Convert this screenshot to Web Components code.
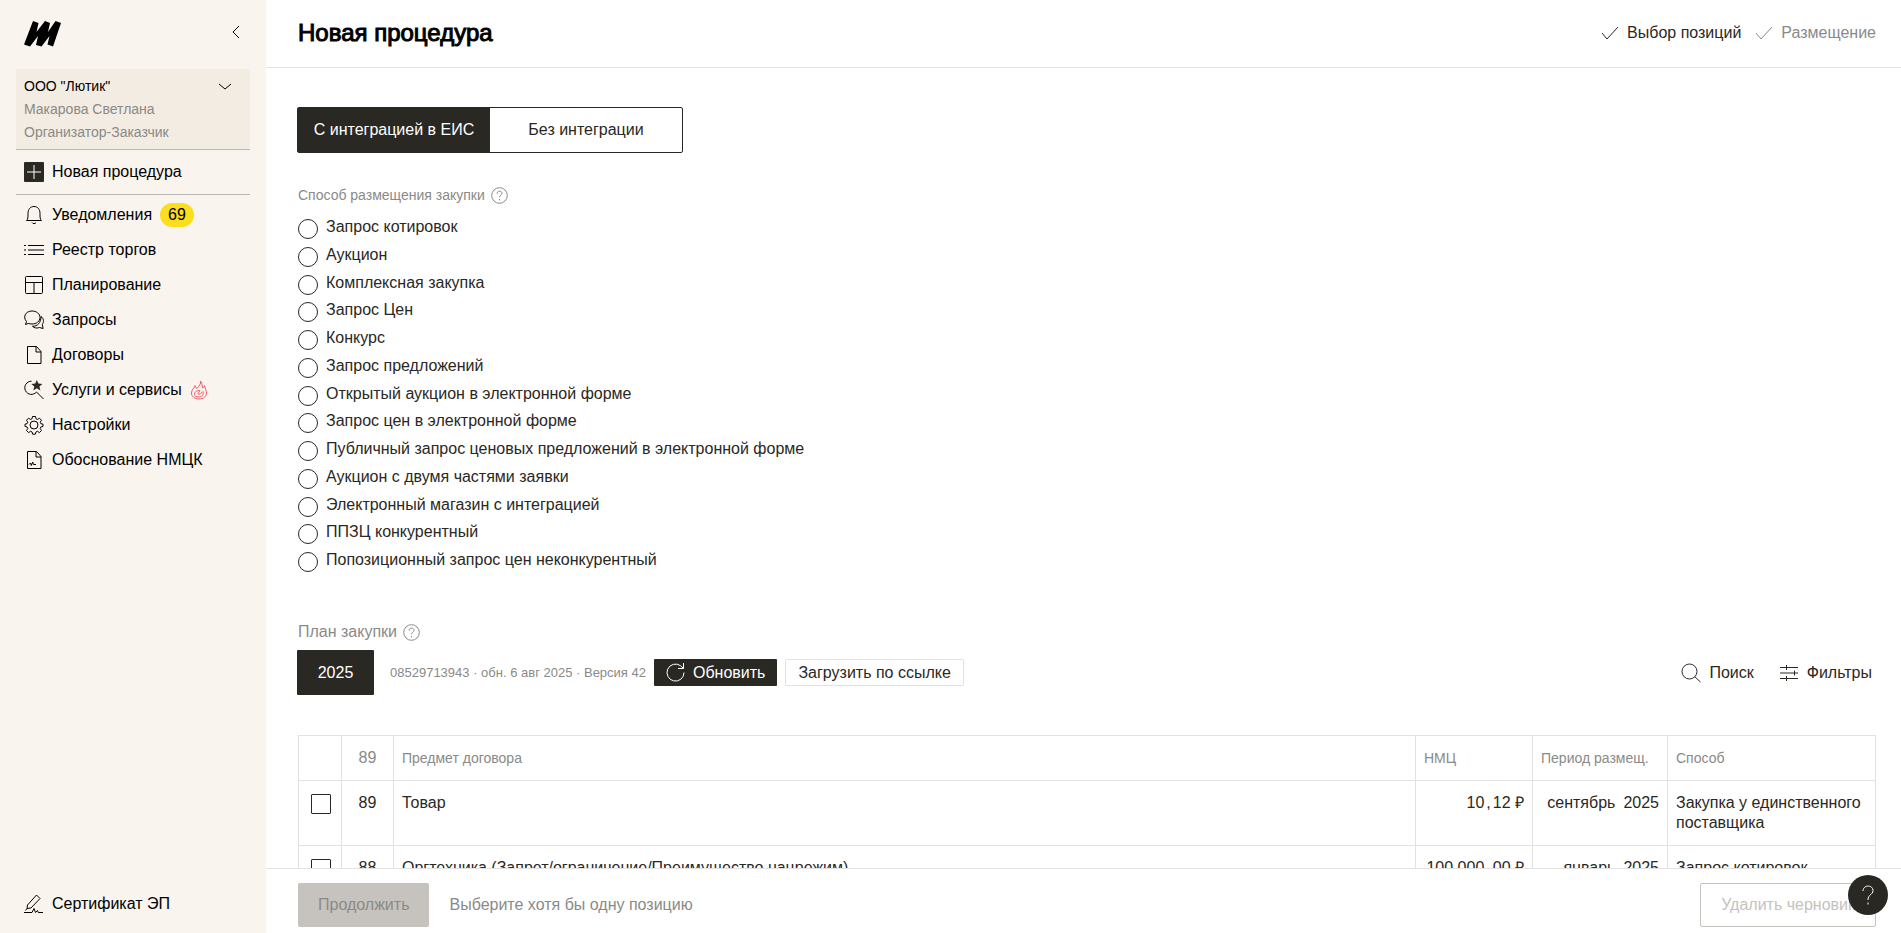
<!DOCTYPE html>
<html lang="ru">
<head>
<meta charset="utf-8">
<title>Новая процедура</title>
<style>
  html, body {
    height: 100%;
    margin: 0;
  }

  body {
    --dark: #2a2823;
    --grey: #8a8a88;
    --line: #e2e2e2;
    font-family: "Liberation Sans", Arial, sans-serif;
    font-size: 16px;
    line-height: 20px;
    color: var(--dark);
    background: #fff;
  }
</style>
</head>
<body>
<app-shell>
  <side-bar slot="side"></side-bar>
  <page-header slot="header" heading="Новая процедура">
    <step-mark>Выбор позиций</step-mark>
    <step-mark pending>Размещение</step-mark>
  </page-header>
  <mode-switch></mode-switch>
  <purchase-method></purchase-method>
  <plan-toolbar></plan-toolbar>
  <plan-table></plan-table>
  <page-footer slot="footer"></page-footer>
</app-shell>
<help-button></help-button>

<script>
const icons = {
  logo: '<svg width="38" height="26" viewBox="0 0 38 26"><path d="M9 0 14.500 2 12.500 11 21 0 26 2 24 11 31.500 0 37 2 29 25.500 23.500 23.500 25.500 15 17.500 25.500 12 24 14 15 6 25.500 0 23.500Z" fill="#000" stroke="none"/></svg>',
  left: '<svg width="8" height="14" viewBox="0 0 8 14"><path d="M7 1 1 7l6 6"/></svg>',
  down: '<svg width="14" height="8" viewBox="0 0 14 8"><path d="m1 1 6 5 6-5"/></svg>',
  plus: '<svg width="20" height="20" viewBox="0 0 20 20"><rect width="20" height="20" rx="1" fill="#2a2823" stroke="none"/><path d="M3 10h14M10 3v14" stroke="#fff"/></svg>',
  bell: '<svg width="20" height="20" viewBox="0 0 20 20"><path d="M2.500 15.500c1.500-1.200 1.500-3 1.500-7 0-4.500 2.500-7 6-7s6 2.500 6 7c0 4 0 5.800 1.500 7zM8 17.500c.8 1.500 3.200 1.500 4 0"/></svg>',
  list: '<svg width="20" height="20" viewBox="0 0 20 20"><path d="M0 5.500h2m2 0h16M0 10h2m2 0h16M0 14.500h2m2 0h16" stroke-width="1.200"/></svg>',
  grid: '<svg width="20" height="20" viewBox="0 0 20 20"><rect x="1.500" y="1.500" width="17" height="17" rx="1"/><path d="M1.500 7.500h17M10 7.500v11"/></svg>',
  chat: '<svg width="20" height="20" viewBox="0 0 20 20"><path d="M1.500 14.500 2.500 11.500C-1.500 7 1.500 1 8 1c4.500 0 8 2.800 8 6.500S12.500 14 8 14c-1.200 0-2.500-.2-3.500-.6zM17 6.500c3 2 3 5.500 1.300 8l.8 4-3.600-1c-2.500 1-5.500.6-7-1.200 5 0 8.500-3.500 8.500-9.800"/></svg>',
  file: '<svg width="20" height="20" viewBox="0 0 20 20"><path d="M3.500 1.500h9l4.500 5v12H3.500zM12 1.500V7h5"/></svg>',
  magic: '<svg width="20" height="20" viewBox="0 0 20 20"><path d="M7.500 1.200A6.600 6.600 0 1 0 12.500 12L19.500 19"/><path d="m12.800 0 1.600 3.600 4 .3-3 2.600 1 3.900-3.600-2.200-3.500 2.200 1-3.900-3-2.600 4-.3z" fill="#2a2823" stroke="none"/></svg>',
  fire: '<svg width="18" height="20" viewBox="0 0 18 20"><path d="M10.500 1c.8 3-1.500 4.500-3.500 7.500C6 8 5.500 7 5 5.500 4.500 8 1.500 9.500 1.500 13c0 3.500 3 6 7.500 6s7.500-2.500 7.500-6c0-2.500-1.500-4.500-2-7.500-.5 1.500-1 2-2 2.500C12 5.500 12.500 3 10.500 1zM4.500 14.500c0-3 2.500-4 5.500-4-.5 2-2.500 2-2 3.500 1.500.5 3.500-.5 5-2.500 1 2.500-.5 5.500-4 5.500-2.500 0-4.500-.8-4.500-2.500z" stroke="#f4596b"/></svg>',
  gear: '<svg width="20" height="20" viewBox="0 0 20 20"><circle cx="10" cy="10" r="4"/><path d="M8.500 1.500h3l.5 2.300 1.500.6 2-1.200 2 2-1.300 2 .6 1.500 2.200.4v2.300l-2.200.6-.6 1.500 1.300 2-2.100 2.100-2-1.300-1.500.7-.5 2.200H8.600l-.5-2.200-1.500-.7-2 1.300-2.100-2.100 1.300-2-.7-1.500-2.100-.6V9.100l2.100-.4.7-1.500-1.300-2 2-2 2 1.200 1.500-.6z"/></svg>',
  fileSign: '<svg width="20" height="20" viewBox="0 0 20 20"><path d="M3.500 1.500h9l4.500 5v12H3.500zM12 1.500V7h5M5 14.500l1.500-1.500.8 2.500 1.400-3.500.8 2.500H12"/></svg>',
  sign: '<svg width="20" height="20" viewBox="0 0 20 20"><path d="M3 14.500 3.500 11 12.500 1 16 4.500 7 14zM0 18.500h8l2-4 1.500 4 2-2 .8 2H19M3 14.500l-1.500 2"/></svg>',
  check: '<svg width="18" height="14" viewBox="0 0 18 14"><path d="m1 7 5 6L17 1"/></svg>',
  hint: '<svg width="17" height="17" viewBox="0 0 17 17"><circle cx="8.500" cy="8.500" r="7.800"/><path d="M6 6.700C6 3.300 11 3.400 11 6.300c0 2-2.500 2-2.500 4M8.500 12v1.400"/></svg>',
  refresh: '<svg width="19" height="19" viewBox="0 0 19 19"><path d="M18 9.500A8.500 8.500 0 1 1 14.500 2.700L17.500 5.500M17.500 0v5.500H12"/></svg>',
  search: '<svg width="20" height="20" viewBox="0 0 20 20"><circle cx="8.500" cy="8.500" r="7.500"/><path d="m14 14 5.500 5"/></svg>',
  filters: '<svg width="20" height="18" viewBox="0 0 20 18"><path d="M1 3.500h18M1 9h18M1 14.500h18M7.500 1v5M15.500 6.500v5M7.500 12v5"/></svg>',
  question: '<svg width="12" height="20" viewBox="0 0 12 20"><path d="M1 6C1 -.5 11 -.5 11 5.500 11 10 6 9 6 15M6 17.500v2"/></svg>'
};

const buttonStyles = `
  button {
    font: inherit;
    color: inherit;
    cursor: pointer;
    padding: 0;
    margin: 0;
    border: 0;
    background: none;
  }
`;

function render(el, html) {
  const template = document.createElement('template');
  template.innerHTML = html;
  el.attachShadow({ mode: 'open' }).appendChild(template.content.cloneNode(true));
}

class UiIcon extends HTMLElement {
  constructor() {
    super();
    render(this, `
      <style>
        :host { display: inline-flex; flex: none; align-items: center; justify-content: center; }
        svg { display: block; fill: none; stroke: currentColor; }
      </style>
      ${icons[this.getAttribute('name')]}
    `);
  }
}

class AppShell extends HTMLElement {
  constructor() {
    super();
    render(this, `
      <style>
        :host { display: grid; grid-template-columns: 266px minmax(0, 1fr); height: 100vh; }
        .page { display: flex; flex-direction: column; min-height: 0; height: 100vh; }
        main { flex: 1; min-height: 0; overflow-y: auto; scrollbar-width: none; padding: 39px 25px 0 32px; }
      </style>
      <slot name="side"></slot>
      <div class="page">
        <slot name="header"></slot>
        <main><slot></slot></main>
        <slot name="footer"></slot>
      </div>
    `);
  }
}

class NavItem extends HTMLElement {
  constructor() {
    super();
    render(this, `
      <style>
        :host { display: block; }
        a { display: flex; align-items: center; gap: 8px; height: 35px; padding-left: 8px; color: #000; text-decoration: none; }
        ui-icon { width: 20px; }
      </style>
      <a href="#"><ui-icon name="${this.getAttribute('icon')}"></ui-icon><slot></slot></a>
    `);
  }
}

class SideBar extends HTMLElement {
  constructor() {
    super();
    render(this, `
      <style>
        ${buttonStyles}
        :host { display: flex; flex-direction: column; padding: 0 16px; background: #f9f4ee; color: #000; }
        .top { display: flex; align-items: center; justify-content: space-between; height: 67px; padding: 0 10px 2px 8px; }
        .card { background: #f3ece2; border-bottom: 1px solid #b9b8b6; padding: 6px 18px 5px 8px; font-size: 14px; line-height: 23px; }
        .card button { display: flex; width: 100%; justify-content: space-between; align-items: center; }
        .card div { color: var(--grey); }
        .new { display: flex; flex-direction: column; justify-content: center; height: 44px; border-bottom: 1px solid #b9b8b6; }
        nav { flex: 1; padding-top: 2px; }
        .badge { background: #fbdf1f; border-radius: 12px; padding: 2px 8px; }
        .cert { padding-bottom: 12px; }
      </style>
      <div class="top">
        <ui-icon name="logo"></ui-icon>
        <button aria-label="Свернуть меню"><ui-icon name="left"></ui-icon></button>
      </div>
      <div class="card">
        <button><span>ООО "Лютик"</span><ui-icon name="down"></ui-icon></button>
        <div>Макарова Светлана</div>
        <div>Организатор-Заказчик</div>
      </div>
      <div class="new"><nav-item icon="plus">Новая процедура</nav-item></div>
      <nav>
        <nav-item icon="bell">Уведомления <span class="badge">69</span></nav-item>
        <nav-item icon="list">Реестр торгов</nav-item>
        <nav-item icon="grid">Планирование</nav-item>
        <nav-item icon="chat">Запросы</nav-item>
        <nav-item icon="file">Договоры</nav-item>
        <nav-item icon="magic">Услуги и сервисы <ui-icon name="fire"></ui-icon></nav-item>
        <nav-item icon="gear">Настройки</nav-item>
        <nav-item icon="fileSign">Обоснование НМЦК</nav-item>
      </nav>
      <nav-item class="cert" icon="sign">Сертификат ЭП</nav-item>
    `);
  }
}

class PageHeader extends HTMLElement {
  constructor() {
    super();
    render(this, `
      <style>
        :host { display: flex; align-items: center; justify-content: space-between; height: 65px; padding: 0 25px 2px 32px; border-bottom: 1px solid var(--line); }
        h1 { margin: 0; font-size: 24px; line-height: 28px; font-weight: 400; color: #000; -webkit-text-stroke: 1px #000; }
        .steps { display: flex; gap: 14px; }
      </style>
      <h1>${this.getAttribute('heading')}</h1>
      <div class="steps"><slot></slot></div>
    `);
  }
}

class StepMark extends HTMLElement {
  constructor() {
    super();
    render(this, `
      <style>
        :host { display: flex; align-items: center; gap: 8px; }
        :host([pending]) { color: var(--grey); }
      </style>
      <ui-icon name="check"></ui-icon><slot></slot>
    `);
  }
}

class ModeSwitch extends HTMLElement {
  constructor() {
    super();
    render(this, `
      <style>
        ${buttonStyles}
        :host { display: flex; width: 386px; height: 46px; margin-left: -1px; box-sizing: border-box; border: 1px solid var(--dark); border-radius: 2px; }
        button { flex: 1; }
        .on { background: var(--dark); color: #fff; }
      </style>
      <button class="on">С интеграцией в ЕИС</button>
      <button>Без интеграции</button>
    `);
  }
}

class HintLabel extends HTMLElement {
  constructor() {
    super();
    render(this, `
      <style>
        :host { display: flex; align-items: center; gap: 6px; color: var(--grey); }
      </style>
      <slot></slot><ui-icon name="hint"></ui-icon>
    `);
  }
}

class PurchaseMethod extends HTMLElement {
  constructor() {
    super();
    const methods = [
      'Запрос котировок',
      'Аукцион',
      'Комплексная закупка',
      'Запрос Цен',
      'Конкурс',
      'Запрос предложений',
      'Открытый аукцион в электронной форме',
      'Запрос цен в электронной форме',
      'Публичный запрос ценовых предложений в электронной форме',
      'Аукцион с двумя частями заявки',
      'Электронный магазин с интеграцией',
      'ППЗЦ конкурентный',
      'Попозиционный запрос цен неконкурентный'
    ];
    render(this, `
      <style>
        :host { display: block; margin-top: 32px; }
        hint-label { font-size: 14px; }
        .list { display: grid; grid-auto-rows: 1fr; height: 361px; margin-top: 9px; justify-items: start; }
        label { display: flex; align-items: flex-start; gap: 8px; padding-top: 3px; }
        input { appearance: none; width: 20px; height: 20px; margin: 2px 0 0; border: 1px solid var(--dark); border-radius: 50%; background: #fff; }
        input:checked { border-width: 6px; }
      </style>
      <hint-label>Способ размещения закупки</hint-label>
      <div class="list">
        ${methods.map((name, i) => `<label for="m${i}"><input type="radio" name="method" id="m${i}">${name}</label>`).join('')}
      </div>
    `);
  }
}

class PlanToolbar extends HTMLElement {
  constructor() {
    super();
    render(this, `
      <style>
        ${buttonStyles}
        :host { display: block; margin-top: 47px; }
        .bar { display: flex; align-items: center; gap: 8px; margin: 8px 0 0 -1px; }
        button { display: flex; align-items: center; justify-content: center; gap: 8px; box-sizing: border-box; height: 27px; border-radius: 1px; }
        .year { width: 77px; height: 45px; background: var(--dark); color: #fff; }
        .info { font-size: 13px; color: var(--grey); margin-left: 8px; }
        .update { background: var(--dark); color: #fff; padding: 0 12px; }
        .link { border: 1px solid var(--line); padding: 0 12px; }
        .tools { display: flex; gap: 25px; margin-left: auto; padding-right: 4px; }
      </style>
      <hint-label>План закупки</hint-label>
      <div class="bar">
        <button class="year">2025</button>
        <span class="info">08529713943 · обн. 6 авг 2025 · Версия 42</span>
        <button class="update"><ui-icon name="refresh"></ui-icon>Обновить</button>
        <button class="link">Загрузить по ссылке</button>
        <div class="tools">
          <button><ui-icon name="search"></ui-icon>Поиск</button>
          <button><ui-icon name="filters"></ui-icon>Фильтры</button>
        </div>
      </div>
    `);
  }
}

class PlanTable extends HTMLElement {
  constructor() {
    super();
    const rows = [
      ['89', 'Товар', '10', '12', 'сентябрь', 'Закупка у единственного поставщика'],
      ['88', 'Оргтехника (Запрет/ограничение/Преимущество нацрежим)', '100 000', '00', 'январь', 'Запрос котировок']
    ];
    render(this, `
      <style>
        :host { display: block; margin-top: 40px; }
        table { width: 100%; table-layout: fixed; border-collapse: collapse; }
        th, td { border: 1px solid var(--line); padding: 12px 8px 11px; text-align: left; vertical-align: top; }
        td { height: 40px; }
        th { font-size: 14px; font-weight: 400; color: var(--grey); padding: 12px 8px; }
        th.num { font-size: 16px; }
        td.box { padding: 12px; }
        .num { text-align: center; }
        .sum, .when { text-align: right; white-space: nowrap; }
        th.sum, th.when { text-align: left; }
        .comma { margin: 0 2px; }
        .year { margin-left: 8px; }
        .c1 { width: 43px; }
        .c2 { width: 52px; }
        .c4 { width: 117px; }
        .c5 { width: 135px; }
        .c6 { width: 208px; }
        input { display: block; appearance: none; width: 20px; height: 20px; margin: 1px 0 0; border: 1px solid var(--dark); border-radius: 1px; }
        input:checked { background: var(--dark); }
      </style>
      <table>
        <colgroup><col class="c1"><col class="c2"><col><col class="c4"><col class="c5"><col class="c6"></colgroup>
        <thead>
          <tr><th></th><th class="num">89</th><th>Предмет договора</th><th class="sum">НМЦ</th><th class="when">Период размещ.</th><th>Способ</th></tr>
        </thead>
        <tbody>
          ${rows.map(([num, name, rub, kop, month, way]) => `
            <tr>
              <td class="box"><input type="checkbox" aria-label="${name}"></td>
              <td class="num">${num}</td>
              <td>${name}</td>
              <td class="sum">${rub}<span class="comma">,</span>${kop} ₽</td>
              <td class="when">${month}<span class="year">2025</span></td>
              <td>${way}</td>
            </tr>`).join('')}
        </tbody>
      </table>
    `);
  }
}

class PageFooter extends HTMLElement {
  constructor() {
    super();
    render(this, `
      <style>
        ${buttonStyles}
        :host { display: flex; align-items: center; gap: 20px; padding: 14px 25px 6px 32px; border-top: 1px solid var(--line); background: #fff; color: var(--grey); }
        button { box-sizing: border-box; height: 44px; padding: 0 20px; border-radius: 2px; }
        .next { background: #c6c2bd; color: var(--grey); }
        .drop { margin-left: auto; border: 1px solid #c6c2bd; color: #c6c2bd; }
      </style>
      <button class="next" disabled>Продолжить</button>
      <span>Выберите хотя бы одну позицию</span>
      <button class="drop" disabled>Удалить черновик</button>
    `);
  }
}

class HelpButton extends HTMLElement {
  constructor() {
    super();
    render(this, `
      <style>
        ${buttonStyles}
        :host { position: fixed; right: 13px; bottom: 18px; }
        button { display: flex; align-items: center; justify-content: center; width: 40px; height: 40px; border-radius: 50%; background: var(--dark); color: #fff; }
      </style>
      <button aria-label="Помощь"><ui-icon name="question"></ui-icon></button>
    `);
  }
}

customElements.define('ui-icon', UiIcon);
customElements.define('nav-item', NavItem);
customElements.define('side-bar', SideBar);
customElements.define('step-mark', StepMark);
customElements.define('page-header', PageHeader);
customElements.define('mode-switch', ModeSwitch);
customElements.define('hint-label', HintLabel);
customElements.define('purchase-method', PurchaseMethod);
customElements.define('plan-toolbar', PlanToolbar);
customElements.define('plan-table', PlanTable);
customElements.define('page-footer', PageFooter);
customElements.define('help-button', HelpButton);
customElements.define('app-shell', AppShell);
</script>
</body>
</html>
